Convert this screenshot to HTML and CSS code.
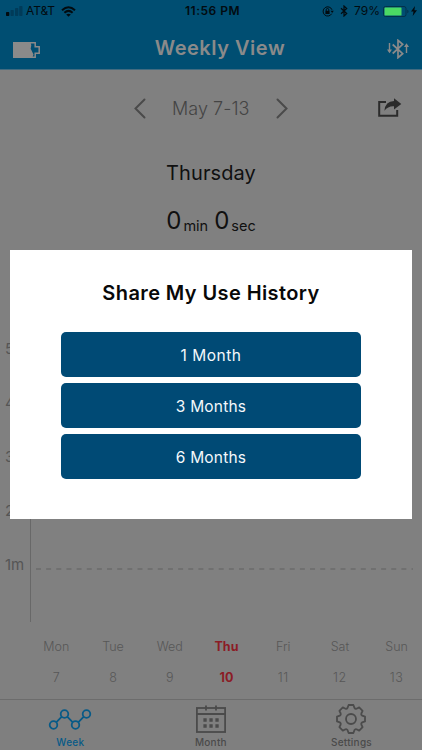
FILE: index.html
```html
<!DOCTYPE html>
<html lang="en">
<head>
<meta charset="utf-8">
<title>Weekly View</title>
<link rel="stylesheet" href="styles.css">
</head>
<body>
<div class="app">
  <header class="header">
    <div class="status">
      <div class="status-left">
        <svg class="signal" width="17" height="10" viewBox="0 0 17 10"><rect x="0" y="6" width="3.3" height="4" rx=".7" fill="#020b10"/><rect x="4.5" y="4" width="3.3" height="6" rx=".7" fill="#003b59"/><rect x="9" y="2" width="3.3" height="8" rx=".7" fill="#003b59"/><rect x="13.2" y="0" width="3.3" height="10" rx=".7" fill="#003b59"/></svg>
        <span class="carrier">AT&amp;T</span>
        <svg class="wifi" width="15" height="11" viewBox="0 0 15 11" fill="none" stroke="#020b10" stroke-width="2"><path d="M1 4.2Q7.5-1.8 14 4.2M3.4 6.7Q7.5 3 11.6 6.7"/><path d="M5.2 8.5Q7.5 6.8 9.8 8.5L7.5 10.8Z" fill="#020b10" stroke="none"/></svg>
      </div>
      <span class="clock">11:56 PM</span>
      <div class="status-right">
        <svg class="lock" width="12" height="11" viewBox="0 0 12 11" fill="none" stroke="#020b10"><path d="M9.7 7.7A4.6 4.6 0 1 1 10 3.8"/><path d="M8.5 4.7h3.3L10.2 7z" fill="#020b10" stroke="none"/><rect x="3.4" y="4.8" width="4.2" height="3.2" fill="#020b10" stroke="none"/><path d="M4.2 5V3.8a1.3 1.3 0 0 1 2.6 0V5"/></svg>
        <svg class="bt" width="8" height="12" viewBox="0 0 8 12" fill="none" stroke="#020b10" stroke-width="1.2"><path d="M1 3.2 6.7 8.5 4 11V1l2.7 2.5L1 8.8"/></svg>
        <span class="percent">79%</span>
        <svg class="charge" width="26" height="11" viewBox="0 0 26 11"><rect x=".5" y=".5" width="22.5" height="10" rx="2" fill="none" stroke="#02314a"/><rect x="1.5" y="1.5" width="17" height="8" rx=".6" fill="#4bd964"/><path d="M24.3 3.7q1.2.2 1.2 1.8t-1.2 1.8z" fill="#02314a"/></svg>
        <svg class="bolt" width="6" height="10" viewBox="0 0 6 10"><path d="M4 0 0 5.6h2.5L1.7 10 6 4.2H3.4z" fill="#020b10"/></svg>
      </div>
    </div>
    <div class="nav">
      <svg class="device" width="27" height="16" viewBox="0 0 27 16"><path d="M0 0h17.5l.8 3.2-.6 3.6 2.8 5.8-1.3 3.4H0z" fill="#8a8a8a"/><path d="M17 .8h5.2v4h4v6.4h-4v4h-4" fill="none" stroke="#8a8a8a" stroke-width="1.5"/></svg>
      <h1 class="title">Weekly View</h1>
      <svg class="sync" width="22" height="20" viewBox="0 0 22 20" fill="none" stroke="#8a8a8a" stroke-width="1.7"><path d="m5.7 5.5 10 9.2-4.7 4V1.3l4.7 4-10 9.2"/><path d="M2.5 4v9M19.5 14V6" stroke-width="1.4"/><path d="M0 10.5h5l-2.5 3.7zM17 8h5l-2.5-3.7z" fill="#8a8a8a" stroke="none"/></svg>
    </div>
  </header>

  <main class="main">
    <div class="range">
      <svg class="prev" width="12" height="21" viewBox="0 0 12 21"><path d="M10.5 1.5 1.5 10.5l9 9" fill="none" stroke="#4a4a4a" stroke-width="2" stroke-linecap="round"/></svg>
      <span class="range-text">May 7-13</span>
      <svg class="next" width="12" height="21" viewBox="0 0 12 21"><path d="m1.5 1.5 9 9-9 9" fill="none" stroke="#4a4a4a" stroke-width="2" stroke-linecap="round"/></svg>
      <svg class="share" width="24" height="20" viewBox="0 0 24 20"><path d="M8 4.1H1.2v13.7h18V12" fill="none" stroke="#2b2b2b" stroke-width="2"/><path d="M6.4 12.8Q7.4 3.3 16 3.1V.2L23.3 6 16 11.5V8.2q-6-.4-9.6 4.6z" fill="#2b2b2b"/></svg>
    </div>
    <div class="day">Thursday</div>
    <div class="usage"><span class="num">0</span><span class="unit min">min</span><span class="num">0</span><span class="unit sec">sec</span></div>
    <div class="chart">
      <div class="labels"><span>5m</span><span>4m</span><span>3m</span><span>2m</span><span>1m</span></div>
      <div class="axis"></div>
      <svg class="grid" width="377" height="2" viewBox="0 0 377 2"><path d="M0 1h377" stroke="#6b6b6b" stroke-width="1.3" stroke-dasharray="5 5.15"/></svg>
    </div>
    <div class="week">
      <div class="col"><span>Mon</span><span>7</span></div>
      <div class="col"><span>Tue</span><span>8</span></div>
      <div class="col"><span>Wed</span><span>9</span></div>
      <div class="col today"><span>Thu</span><span>10</span></div>
      <div class="col"><span>Fri</span><span class="wide">11</span></div>
      <div class="col"><span>Sat</span><span class="wide">12</span></div>
      <div class="col"><span>Sun</span><span class="wide">13</span></div>
    </div>
  </main>

  <footer class="tabs">
    <div class="tab active">
      <svg width="44" height="32" viewBox="0 0 44 32" fill="none" stroke="#075a87" stroke-width="1.8"><path d="m8.2 19.3 5.6-5.6M19.2 13.7l5.6 5.6M30.2 19.3l5.6-5.6"/><circle cx="5.5" cy="22" r="3.8"/><circle cx="16.5" cy="11" r="3.8"/><circle cx="27.5" cy="22" r="3.8"/><circle cx="38.5" cy="11" r="3.8"/></svg>
      <span>Week</span>
    </div>
    <div class="tab">
      <svg width="32" height="32" viewBox="0 0 32 32" fill="none" stroke="#4b4b4b" stroke-width="1.8"><rect x="1.9" y="5" width="28.2" height="24"/><path d="M1.9 11h28.2M11 2.5v5M21 2.5v5"/><path d="M8.4 17h3.3m2.7 0h3.3m2.7 0h3.3M8.4 23h3.3m2.7 0h3.3m2.7 0h3.3" stroke-width="3.3"/></svg>
      <span>Month</span>
    </div>
    <div class="tab">
      <svg width="32" height="32" viewBox="-16 -16 32 32" fill="none" stroke="#4b4b4b" stroke-width="1.8" stroke-linejoin="round"><path d="M-3.4-11.2-2.4-14H2.4L3.4-11.2Q4.2-9.8 5.5-10.3L8.2-11.6 11.6-8.2 10.3-5.5Q9.8-4.2 11.2-3.4L14-2.4V2.4L11.2 3.4Q9.8 4.2 10.3 5.5L11.6 8.2 8.2 11.6 5.5 10.3Q4.2 9.8 3.4 11.2L2.4 14H-2.4L-3.4 11.2Q-4.2 9.8-5.5 10.3L-8.2 11.6-11.6 8.2-10.3 5.5Q-9.8 4.2-11.2 3.4L-14 2.4V-2.4L-11.2-3.4Q-9.8-4.2-10.3-5.5L-11.6-8.2-8.2-11.6-5.5-10.3Q-4.2-9.8-3.4-11.2Z"/><circle r="5"/></svg>
      <span>Settings</span>
    </div>
  </footer>

  <section class="modal">
    <h2>Share My Use History</h2>
    <button class="one">1 Month</button>
    <button>3 Months</button>
    <button>6 Months</button>
  </section>
</div>
</body>
</html>
```
FILE: styles.css
```css
* { box-sizing: border-box; }
body { margin: 0; font-family: Inter, "Liberation Sans", sans-serif; }
svg { display: block; flex: none; }
.app { position: relative; width: 422px; height: 750px; overflow: hidden; display: flex; flex-direction: column; background: #808080; }

.header { height: 70px; flex: none; background: #004e72; border-bottom: 1px solid #426b80; }
.status { height: 22px; display: grid; grid-template-columns: 1fr auto 1fr; align-items: center; color: #020b10; font-size: 12px; line-height: 22px; }
.status-left { display: flex; align-items: center; padding-left: 6px; }
.carrier { margin-left: 3px; width: 29px; white-space: nowrap; letter-spacing: -.1px; }
.wifi { margin-left: 6px; }
.clock { font-weight: 600; letter-spacing: .5px; margin-left: 3px; }
.status-right { display: flex; align-items: center; justify-content: flex-end; padding-right: 5px; }
.lock { margin-right: 6px; }
.bt { margin-right: 6px; }
.percent { margin-right: 3px; }
.bolt { margin-left: 2px; }
.nav { height: 48px; display: grid; grid-template-columns: 1fr auto 1fr; align-items: center; padding: 3px 13px 0; }
.nav .title { margin: 1px 0 0 18px; color: #8a8a8a; font-size: 20px; line-height: 24px; font-weight: 600; letter-spacing: .52px; }
.device { margin-top: 4px; }
.sync { justify-self: end; margin-top: 2px; }

.main { height: 629px; flex: none; display: flex; flex-direction: column; }
.range { height: 74px; display: flex; align-items: center; padding: 2px 20px 0 134px; color: #444; }
.range-text { width: 78px; margin: 0 26px; font-size: 18px; font-weight: 300; white-space: nowrap; letter-spacing: .05px; }
.share { margin-left: auto; }
.day { height: 56px; line-height: 58px; text-align: center; font-size: 20px; letter-spacing: .1px; color: #101010; }
.usage { height: 50px; display: flex; align-items: baseline; justify-content: center; padding-top: 2px; line-height: 38px; color: #101010; }
.num { font-size: 24px; font-weight: 400; }
.unit { font-size: 14.5px; font-weight: 400; margin-left: 2px; position: relative; top: 2px; }
.unit.min { margin-right: 6px; }
.chart { height: 373px; display: flex; padding-top: 72px; }
.labels { width: 30px; padding-left: 5px; color: #555; font-size: 15px; font-weight: 400; display: flex; flex-direction: column; }
.labels span { height: 54px; line-height: 54px; }
.axis { width: 1px; height: 300px; background: #686868; }
.grid { margin: 246px 0 0 5px; }
.week { width: 397px; margin-left: 28px; height: 76px; display: grid; grid-template-columns: repeat(7, 1fr); color: #575757; font-size: 12.5px; font-weight: 300; text-align: center; }
.col { display: flex; flex-direction: column; padding-top: 8px; }
.col span { height: 31px; line-height: 31px; }
.col .wide { letter-spacing: .6px; }
.today { color: #8b1c25; font-weight: 700; }

.tabs { height: 51px; flex: none; border-top: 1px solid #6c6c6c; background: #7f7f7f; display: grid; grid-template-columns: repeat(3, 140.6px); }
.tab { display: flex; flex-direction: column; align-items: center; padding-top: 3px; color: #4a4a4a; font-size: 10px; font-weight: 500; line-height: 15px; letter-spacing: .25px; }
.tab.active { color: #075a87; }

.modal { position: absolute; left: 10px; top: 250px; width: 402px; height: 269px; background: #fff; display: flex; flex-direction: column; align-items: center; gap: 6px; }
.modal h2 { margin: 29px 0 19px; line-height: 28px; font-size: 20px; font-weight: 600; letter-spacing: .4px; color: #080808; }
.modal button { width: 300px; height: 45px; flex: none; border: 0; border-radius: 5px; background: #004a75; color: #f4f8fb; font: 400 15.5px Inter, sans-serif; letter-spacing: .2px; padding: 1px 0 0; }
.modal .one { letter-spacing: .5px; }
```
